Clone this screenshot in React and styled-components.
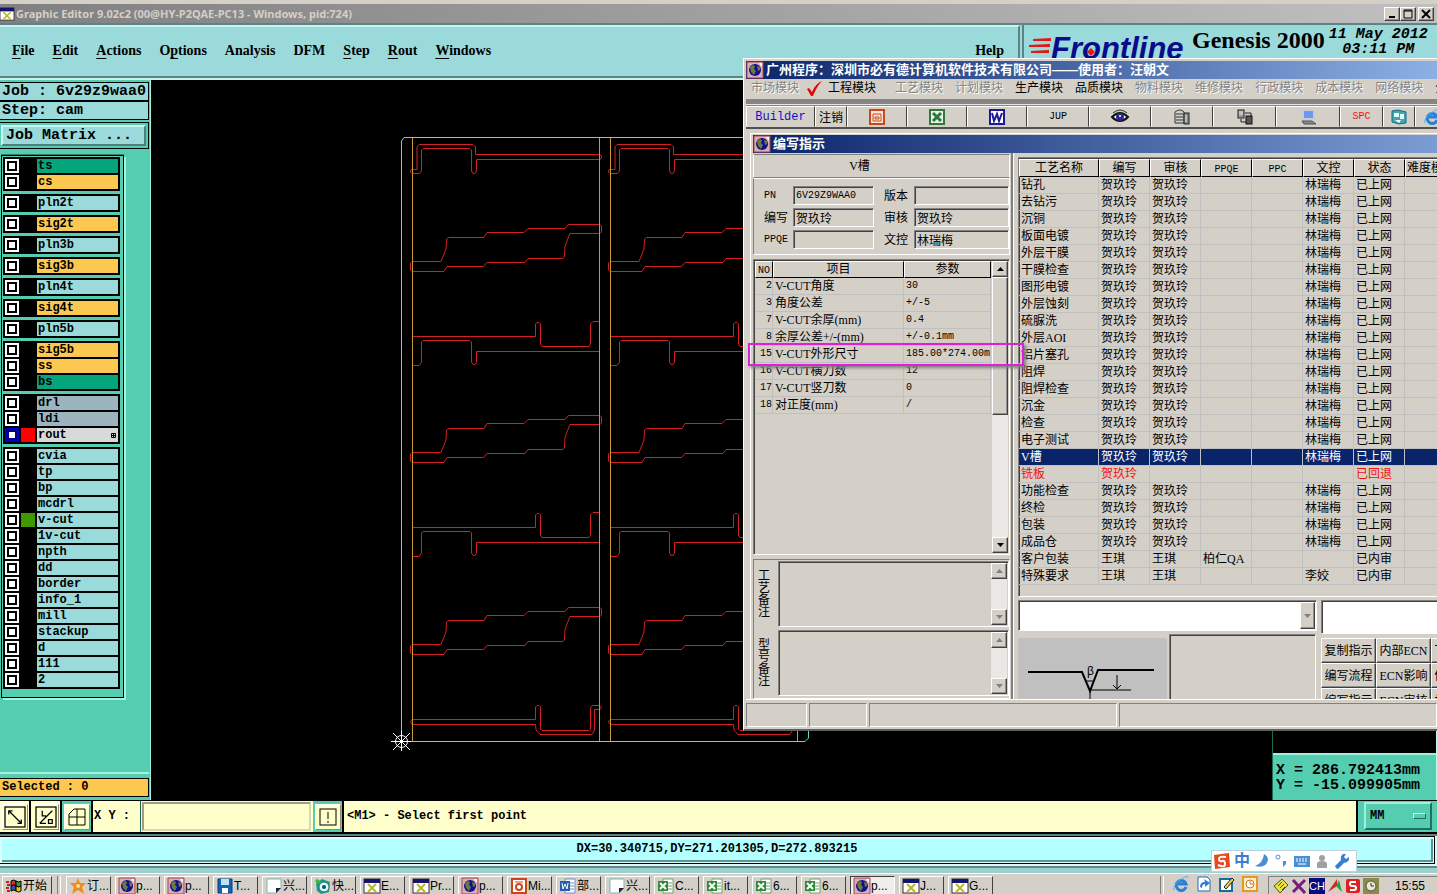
import React from "react";
import styled, { createGlobalStyle, css } from "styled-components";

const MONO = '"Liberation Mono", "Noto Sans CJK SC", monospace';
const SERIF = '"Liberation Serif", "Noto Sans CJK SC", serif';
const SANS = '"Liberation Sans", "Noto Sans CJK SC", sans-serif';

const GlobalStyle = createGlobalStyle`
  * { box-sizing: border-box; }
  body { margin: 0; background: #000; }
  button, input, select, textarea {
    font: inherit;
    color: inherit;
    margin: 0;
    padding: 0;
    border: 0;
    border-radius: 0;
    outline: none;
  }
`;

/* ---------- data ---------- */

const menus = [
  ["F", "ile"],
  ["E", "dit"],
  ["A", "ctions"],
  ["O", "p", "tions"],
  ["", "Analysis"],
  ["", "DFM"],
  ["S", "tep"],
  ["R", "out"],
  ["W", "indows"],
];

const AQUA = "#9bdada";
const ORANGE = "#fcc850";
const GREEN = "#04a57b";
const STEEL = "#9bb4bd";

const layerGroups = [
  [["ts", GREEN], ["cs", ORANGE]],
  [["pln2t", AQUA]],
  [["sig2t", ORANGE]],
  [["pln3b", AQUA]],
  [["sig3b", ORANGE]],
  [["pln4t", AQUA]],
  [["sig4t", ORANGE]],
  [["pln5b", AQUA]],
  [["sig5b", ORANGE], ["ss", ORANGE], ["bs", GREEN]],
  [["drl", STEEL], ["ldi", STEEL], ["rout", "#d9d9d9", "#ff0000", true]],
  [
    ["cvia", AQUA],
    ["tp", AQUA],
    ["bp", AQUA],
    ["mcdrl", AQUA],
    ["v-cut", AQUA, "#3f9a00"],
    ["1v-cut", AQUA],
    ["npth", AQUA],
    ["dd", AQUA],
    ["border", AQUA],
    ["info_1", AQUA],
    ["mill", AQUA],
    ["stackup", AQUA],
    ["d", AQUA],
    ["111", AQUA],
    ["2", AQUA],
  ],
];

const modules = [
  ["工艺模块", false],
  ["计划模块", false],
  ["生产模块", true],
  ["品质模块", true],
  ["物料模块", false],
  ["维修模块", false],
  ["行政模块", false],
  ["成本模块", false],
  ["网络模块", false],
  ["企业模块", true],
];

const params = [
  ["2", "V-CUT角度", "30"],
  ["3", "角度公差", "+/-5"],
  ["7", "V-CUT余厚(mm)", "0.4"],
  ["8", "余厚公差+/-(mm)", "+/-0.1mm"],
  ["15", "V-CUT外形尺寸", "185.00*274.00m"],
  ["16", "V-CUT横刀数", "12"],
  ["17", "V-CUT竖刀数", "0"],
  ["18", "对正度(mm)", "/"],
];

const H = "贺玖玲";
const L = "林瑞梅";
const steps = [
  "钻孔",
  "去钻污",
  "沉铜",
  "板面电镀",
  "外层干膜",
  "干膜检查",
  "图形电镀",
  "外层蚀刻",
  "硫脲洗",
  "外层AOI",
  "铝片塞孔",
  "阻焊",
  "阻焊检查",
  "沉金",
  "检查",
  "电子测试",
  "V槽",
  "铣板",
  "功能检查",
  "终检",
  "包装",
  "成品仓",
].map((name) =>
  name === "铣板"
    ? { name, state: "back", cells: [H, "", "", "", "", "已回退", ""] }
    : {
        name,
        state: name === "V槽" ? "active" : "",
        cells: [H, H, "", "", L, "已上网", ""],
      }
);
steps.push({ name: "客户包装", cells: ["王琪", "王琪", "柏仁QA", "", "", "已内审", ""] });
steps.push({ name: "特殊要求", cells: ["王琪", "王琪", "", "", "李姣", "已内审", ""] });

const tasks = [
  ["star", "订..."],
  ["globe", "p..."],
  ["globe", "p..."],
  ["disk", "T..."],
  ["page", "兴..."],
  ["eye", "快..."],
  ["xwin", "E..."],
  ["xwin", "Pr..."],
  ["globe", "p..."],
  ["ppt", "Mi..."],
  ["word", "部..."],
  ["page", "兴..."],
  ["excel", "C..."],
  ["excel", "it..."],
  ["excel", "6..."],
  ["excel", "6..."],
  ["globe", "p...", true],
  ["xwin", "J..."],
  ["xwin", "G..."],
];

/* ---------- icons ---------- */

const shapes = {
  globe: (
    <>
      <rect width="16" height="16" fill="#d8b0b4" />
      <path d="M0 0h16v16H0z" fill="none" stroke="#b04050" />
      <circle cx="8" cy="8" r="6" fill="#101090" />
      <path d="M3 5l3-2 2 1-1 3 2 2-2 4-3-3zM10 4l3 1v3l-2 1z" fill="#6a7a40" />
      <path d="M12 1l3 0v4z" fill="#fff" />
    </>
  ),
  xwin: (
    <>
      <rect x="0" y="1" width="16" height="14" fill="#fff" stroke="#333" />
      <rect x="0" y="1" width="16" height="4" fill="#14146e" />
      <path d="M4 6l8 8M12 6l-8 8" stroke="#b8b820" strokeWidth="2" />
    </>
  ),
  star: (
    <>
      <path d="M8 0l2 5 6 0-4 4 2 7-6-4-6 4 2-7-4-4 6 0z" fill="#f08a1c" />
      <circle cx="8" cy="8" r="2" fill="#ffe0a0" />
    </>
  ),
  disk: (
    <>
      <path d="M1 1h14v14H1z" fill="#1464b4" stroke="#0a3c78" />
      <path d="M4 1h8v6H4z" fill="#bfe4f8" />
      <path d="M5 10h6v5H5z" fill="#fff" />
    </>
  ),
  page: (
    <>
      <path d="M1 1h14v9l-5 5H1z" fill="#fff" stroke="#7fb8b8" />
      <path d="M15 10h-5v5z" fill="#223" />
    </>
  ),
  eye: (
    <>
      <path d="M1 5l6-4 8 3-1 10-8 2-4-3z" fill="#1f9a8a" />
      <circle cx="9" cy="9" r="5" fill="#dff8f4" stroke="#107a70" />
      <circle cx="9" cy="9" r="2" fill="#104a8a" />
      <path d="M1 2l4 3" stroke="#3cb43c" strokeWidth="3" />
    </>
  ),
  ppt: (
    <>
      <rect x="1" y="1" width="14" height="14" fill="#fff" stroke="#c8481c" strokeWidth="2" />
      <circle cx="8" cy="9" r="3" fill="none" stroke="#c8481c" strokeWidth="2" />
      <path d="M4 4h8" stroke="#c8481c" strokeWidth="1" />
    </>
  ),
  word: (
    <>
      <path d="M5 1h10v14H5z" fill="#fff" stroke="#6f8fc0" />
      <path d="M10 5h4M10 8h4M10 11h4" stroke="#6f8fc0" />
      <rect x="0" y="3" width="10" height="10" fill="#2a5cb0" />
      <path d="M2 5l1 6 2-5 2 5 1-6" fill="none" stroke="#fff" />
    </>
  ),
  excel: (
    <>
      <path d="M5 1h10v14H5z" fill="#fff" stroke="#6fa070" />
      <path d="M10 5h4M10 8h4M10 11h4" stroke="#6fa070" />
      <rect x="0" y="3" width="10" height="10" fill="#2f8a3a" />
      <path d="M2 5l6 6M8 5l-6 6" stroke="#fff" strokeWidth="2" />
    </>
  ),
  flag: (
    <>
      <path d="M5 3q3-2 5 0v5q-2-2-5 0z" fill="#e03020" stroke="#000" />
      <path d="M10 3q3 2 5 0v5q-2 2-5 0z" fill="#30a030" stroke="#000" />
      <path d="M5 8q3-2 5 0v5q-2-2-5 0z" fill="#3050c0" stroke="#000" />
      <path d="M10 8q3 2 5 0v5q-2 2-5 0z" fill="#f0c020" stroke="#000" />
      <path d="M0 4h3M1 7h3M0 10h3M1 13h3" stroke="#c02020" strokeWidth="2" />
    </>
  ),
  tbPpt: (
    <>
      <rect x="1" y="1" width="14" height="14" fill="#fbe4d8" stroke="#c8481c" strokeWidth="2" />
      <path d="M4 5h8v7H4zM6 8h4v2H6z" fill="none" stroke="#c8481c" strokeWidth="1" />
    </>
  ),
  tbExcel: (
    <>
      <rect x="1" y="1" width="14" height="14" fill="#e4f4e4" stroke="#2f7a3a" strokeWidth="2" />
      <path d="M4 4l8 8M12 4l-8 8" stroke="#2f7a3a" strokeWidth="3" />
    </>
  ),
  tbWord: (
    <>
      <rect x="1" y="1" width="14" height="14" fill="#fff" stroke="#1a1a9a" strokeWidth="2" />
      <path d="M3 4l2 8 3-7 2 7 3-8" fill="none" stroke="#1a1a9a" strokeWidth="2" />
    </>
  ),
  tbEye: (
    <>
      <path d="M0 8q8-8 16 0q-8 8-16 0z" fill="#fff" stroke="#111" strokeWidth="2" />
      <circle cx="8" cy="8" r="4" fill="#2a2a8a" />
      <circle cx="8" cy="7" r="1" fill="#fff" />
      <path d="M1 4q7-6 14 0" fill="none" stroke="#333" />
    </>
  ),
  tbDb: (
    <>
      <path d="M1 3q5-4 9 0v11H1z" fill="#d0d0cc" stroke="#333" />
      <path d="M2 5h7M2 8h7M2 11h7" stroke="#333" />
      <rect x="10" y="4" width="5" height="11" fill="#888" stroke="#222" />
      <path d="M12 6v7" stroke="#eee" />
    </>
  ),
  tbNet: (
    <>
      <rect x="1" y="1" width="6" height="8" fill="#999" stroke="#222" />
      <path d="M2 3h4M2 5h4" stroke="#eee" />
      <path d="M8 4h6v3M4 10v3h5" fill="none" stroke="#222" />
      <rect x="9" y="7" width="6" height="8" fill="#555" stroke="#111" />
    </>
  ),
  tbPc: (
    <>
      <path d="M3 1h11v9H3z" fill="#6a9af0" stroke="#c8ccd8" strokeWidth="2" />
      <path d="M2 12h10l4 3H4z" fill="#888" stroke="#555" />
    </>
  ),
  tbCard: (
    <>
      <path d="M1 2l6-1 8 2v11l-7 1-7-2z" fill="#3aa8b0" stroke="#1c6a80" />
      <path d="M3 4h5v4H3zM9 5h4v5H9z" fill="#e8fafa" />
      <path d="M4 11h6l-2 3" fill="#fff" />
    </>
  ),
  ie: (
    <>
      <path d="M13 11A5 5 0 1 1 13 8H5" fill="none" stroke="#2a80d8" strokeWidth="3" />
      <path d="M1 14Q-1 10 7 4t8-2" fill="none" stroke="#5ab0f0" strokeWidth="1" />
    </>
  ),
  sync: (
    <>
      <path d="M2 1h9l3 3v11H2z" fill="#fff" stroke="#2a6ab0" />
      <path d="M4 11q0-5 5-5l-1-3 6 4-5 4 0-3q-3 0-3 4z" fill="#2a80d8" />
    </>
  ),
  note: (
    <>
      <path d="M1 3h12v12H1z" fill="#fff" stroke="#1a6a9a" strokeWidth="2" />
      <path d="M5 11l8-9 2 2-8 9z" fill="#e8d060" stroke="#222" />
    </>
  ),
  clock: (
    <>
      <rect x="1" y="1" width="14" height="14" fill="#fff0c8" stroke="#e89820" strokeWidth="2" />
      <circle cx="8" cy="8" r="4" fill="#fff" stroke="#c87820" />
      <path d="M8 5v3h3" fill="none" stroke="#c87820" />
    </>
  ),
  note2: (
    <>
      <path d="M1 8l8-7 6 6-8 8z" fill="#e8e040" stroke="#555510" />
      <path d="M5 8l4-4M7 10l4-4M9 12l3-3" stroke="#555510" />
    </>
  ),
  cross: <path d="M2 2l12 13M14 2L2 14" stroke="#7a1a7a" strokeWidth="3" />,
  arrow: (
    <>
      <path d="M1 14L10 1v7z" fill="#e02020" />
      <path d="M9 8l3-6 3 12z" fill="#20a040" />
    </>
  ),
  sred: (
    <>
      <rect x="1" y="1" width="14" height="14" rx="2" fill="#e02020" />
      <path d="M11 4H6q-1 0-1 2t2 2h2q2 0 2 2t-2 2H5" fill="none" stroke="#fff" strokeWidth="2" />
    </>
  ),
  clock2: (
    <>
      <rect width="16" height="16" fill="#8a8a4a" />
      <circle cx="8" cy="8" r="5" fill="#e8e8d8" stroke="#555530" />
      <path d="M8 5v3h3" fill="none" stroke="#333" />
    </>
  ),
  sogou: (
    <>
      <path d="M0 2l15-2 1 14-15 2z" fill="#e8481c" />
      <path d="M12 4Q5 3 5 6t3 2 3 3-7 1" fill="none" stroke="#fff" strokeWidth="2" />
    </>
  ),
  moon: <path d="M10 1q-1 9-9 12q11 3 13-6q0-4-4-6z" fill="#4a90d0" />,
  dot: (
    <>
      <circle cx="4" cy="4" r="2" fill="none" stroke="#4a90d0" />
      <path d="M9 8h3v3l-3 3v-2z" fill="#4a90d0" />
    </>
  ),
  keys: (
    <>
      <rect x="0" y="3" width="16" height="11" fill="#4a90d0" />
      <path d="M2 6h12M2 8h12" stroke="#fff" strokeDasharray="2 1" />
      <path d="M4 11h8" stroke="#fff" />
    </>
  ),
  person: (
    <>
      <circle cx="8" cy="5" r="3" fill="#a0a0a0" />
      <path d="M3 15V11q0-3 5-3t5 3v4z" fill="#a0a0a0" />
    </>
  ),
  wrench: (
    <path
      d="M2 15l-1-2 6-6q-1-4 2-6h3l-2 3 2 2 3-2q1 5-5 6l-6 6z"
      fill="#3a80d0"
    />
  ),
  tick: <path d="M0 9l2-1 3 4Q8 4 15 1Q10 6 6 16H4z" fill="#e00c0c" />,
  diag: (
    <>
      <rect x="0" y="0" width="16" height="16" fill="none" stroke="#000" />
      <path d="M3 3l10 10M3 6V3h3M13 10v3h-3" fill="none" stroke="#000" />
    </>
  ),
  angle: (
    <>
      <rect x="0" y="0" width="16" height="16" fill="none" stroke="#000" />
      <path d="M3 13L13 3M3 13h5M5 3v4h3M10 10v3h3v-3z" fill="none" stroke="#000" />
    </>
  ),
  grid: (
    <>
      <path d="M0 16V5L5 0H16V16zM0 8h16M8 0v16" fill="none" stroke="#000" />
    </>
  ),
  bang: (
    <>
      <rect x="0" y="0" width="16" height="16" fill="none" stroke="#000" />
      <path d="M8 3v7M8 12v2" stroke="#000" strokeWidth="1" />
    </>
  ),
};

const Svg = styled.svg`
  display: block;
  flex: none;
  overflow: visible;
`;

const Icon = ({ name, size = 16 }) => (
  <Svg width={size} height={size} viewBox="0 0 16 16" aria-hidden="true">
    {shapes[name]}
  </Svg>
);

/* ---------- shared bevels ---------- */

const raised = css`
  border: 1px solid;
  border-color: #fff #404040 #404040 #fff;
  box-shadow: inset -1px -1px 0 #909090;
`;

const sunken = css`
  border: 1px solid;
  border-color: #808080 #fff #fff #808080;
  box-shadow: inset 1px 1px 0 #404040;
`;

const Screen = styled.div`
  position: relative;
  display: flex;
  flex-direction: column;
  min-height: 100vh;
  overflow: hidden;
  background: #000;
  color: #000;
`;

const TitleBar = styled.header`
  display: flex;
  align-items: center;
  height: 23px;
  border-top: 4px solid #d4d0c8;
  background: linear-gradient(90deg, #808080, #c0c0c0);
  padding-right: 3px;
  color: #d4d0c8;
  font: bold 11px/18px "Noto Sans", ${SANS};
`;

const TitleText = styled.h1`
  flex: 1;
  margin: 0 0 0 2px;
  font: inherit;
  white-space: nowrap;
`;

const WinButton = styled.button`
  width: 16px;
  height: 14px;
  background: #d4d0c8;
  color: #000;
  display: grid;
  place-items: center;
  ${raised}
  margin-left: ${(p) => (p.$gap ? 2 : 0)}px;
`;

const Header = styled.div`
  display: flex;
  height: 57px;
  background: #9bdada;
  border-top: 2px solid #5c8484;
`;

const MenuBar = styled.nav`
  flex: 1;
  display: flex;
  align-items: center;
  gap: 18px;
  padding: 0 14px 2px 12px;
  border-top: 2px solid #c8f4f0;
  border-right: 2px solid #5c8484;
  border-bottom: 2px solid #5c8484;
  box-shadow: 0 2px 0 #c8f4f0;
  margin-bottom: 2px;
  font: bold 14px/18px ${SERIF};
`;

const MenuItem = styled.button`
  background: none;
  margin-left: ${(p) => (p.$last ? "auto" : 0)};
  u {
    text-underline-offset: 3px;
  }
`;

const Brand = styled.div`
  display: flex;
  width: 415px;
  margin-left: 2px;
  padding: 1px 5px 0 4px;
  border-left: 2px solid #5c8484;
`;

const BrandName = styled.div`
  font: bold 24px/28px ${SERIF};
  white-space: nowrap;
  margin-left: 4px;
`;

const BrandDate = styled.div`
  flex: 1;
  padding-top: 1px;
  font: italic bold 15px/15px ${MONO};
  text-align: center;
  white-space: nowrap;
`;

const Workspace = styled.div`
  flex: 1;
  display: flex;
`;

const Sidebar = styled.aside`
  display: flex;
  flex-direction: column;
  width: 151px;
  padding: 2px 2px 3px 0;
  background: #55cdb1;
  box-shadow: inset -1px 0 0 #9ff0dc;
  font-family: ${MONO};
  font-weight: bold;
`;

const JobLine = styled.div`
  height: 19px;
  padding-left: 2px;
  border: 1px solid #000;
  border-left: 0;
  background: #9bdada;
  font-size: 15px;
  line-height: 18px;
  white-space: nowrap;
`;

const MatrixFrame = styled.div`
  margin: 2px 0 6px;
  height: 27px;
  padding: 2px 2px 2px 1px;
  border: 1px solid #000;
  border-left: 0;
`;

const MatrixButton = styled.button`
  width: 100%;
  height: 21px;
  padding-left: 3px;
  text-align: left;
  background: #9bdada;
  border: 2px solid;
  border-color: #c8f8f4 #4d7d7d #4d7d7d #c8f8f4;
  font-size: 15px;
  line-height: 17px;
`;

const LayerPanel = styled.div`
  width: 123px;
  margin-left: 1px;
  padding: 1px 2px 8px 1px;
  display: flex;
  flex-direction: column;
  gap: 3px;
  border: 1px solid #000;
  box-shadow: 2px 2px 0 #a8f0e0, 0 -1px 0 #3c7a6c;
`;

const LayerGroup = styled.div`
  padding: 1px 2px;
  width: 117px;
  background: #000;
`;

const LayerRow = styled.label`
  display: flex;
  align-items: center;
  gap: 2px;
  height: 16px;
`;

const LayerCheck = styled.input.attrs({ type: "checkbox" })`
  appearance: none;
  width: 14px;
  height: 14px;
  border: 2px solid ${(p) => (p.$on ? "#0000c8" : "#fff")};
  background: #fff;
  box-shadow: inset 0 0 0 2px ${(p) => (p.$on ? "#000080" : "#000")};
`;

const LayerColor = styled.span`
  width: 14px;
  height: 14px;
  background: ${(p) => p.$color || "#000"};
`;

const LayerName = styled.span`
  flex: 1;
  display: flex;
  justify-content: space-between;
  align-items: center;
  height: 14px;
  padding: 0 2px 0 1px;
  background: ${(p) => p.$bg};
  font-size: 12px;
  line-height: 14px;
`;

const Selected = styled.div`
  margin-top: auto;
  height: 19px;
  padding-left: 2px;
  border: 1px solid #000;
  border-left: 0;
  background: #fcc850;
  box-shadow: 0 -4px 0 #55cdb1, 0 -6px 0 #a8f0e0;
  font-size: 12px;
  line-height: 17px;
`;

const Canvas = styled.main`
  flex: 1;
  display: flex;
  justify-content: space-between;
  align-items: flex-end;
  background: #000;
`;

const Side = styled.div`
  width: 165px;
  padding-top: 30px;
  border-left: 1px solid #1c6a5a;
  border-right: 1px solid #c8f8f0;
`;

const Coords = styled.div`
  padding: 8px 0 7px 3px;
  background: #55cdb1;
  box-shadow: 0 -2px 0 #9ff0dc;
  font: bold 15px/15px ${MONO};
  white-space: pre;
`;

const CommandBar = styled.div`
  display: flex;
  height: 34px;
  border-top: 1px solid #000;
  border-bottom: 2px solid #000;
  background: #ffffcc;
  font: bold 12px/30px ${MONO};
`;

const ToolCell = styled.button`
  width: 31px;
  display: grid;
  place-items: center;
  border-right: 2px solid #000;
  background: ${(p) => (p.$on ? "#55cdb1" : "#ffffcc")};
  span {
    padding: ${(p) => (p.$on ? 4 : 2)}px;
    background: #ffffcc;
    border: 1px solid;
    border-color: #fff #8c8c74 #8c8c74 #fff;
  }
`;

const PointLabel = styled.label`
  width: 48px;
  padding-left: 1px;
  border-right: 1px solid #1c6a5a;
  white-space: pre;
`;

const PointInput = styled.input`
  width: 169px;
  height: 29px;
  margin: 1px 2px 0 1px;
  background: #ffffcc;
  border: 2px solid;
  border-color: #a0a080 #d8d8b0 #d8d8b0 #a0a080;
`;

const Prompt = styled.div`
  flex: 1;
  padding-left: 3px;
`;

const UnitBox = styled.div`
  width: 81px;
  padding: 1px 5px 1px 6px;
  border-left: 2px solid #000;
  background: #55cdb1;
`;

const UnitButton = styled.button`
  display: flex;
  justify-content: space-between;
  align-items: center;
  width: 100%;
  height: 28px;
  padding: 0 4px;
  background: #55cdb1;
  border: 2px solid;
  border-color: #9ff0dc #24705e #24705e #9ff0dc;
  i {
    width: 13px;
    height: 6px;
    border: 1px solid;
    border-color: #c8f8f0 #24705e #24705e #c8f8f0;
  }
`;

const StatusWrap = styled.div`
  height: 39px;
  padding-right: 2px;
  background: linear-gradient(#d8f8f8 0 30px, #6c8484 30px 32px, #9bd0d0 32px);
  border-top: 2px solid #5c8484;
`;

const StatusLine = styled.div`
  height: 28px;
  background: #b4ffff;
  border: 1px solid #000;
  border-left: 0;
  box-shadow: inset 2px 2px 0 #d8ffff, inset -1px -1px 0 #d8ffff,
    inset -3px -3px 0 #5c9494;
  font: bold 12px/24px ${MONO};
  text-align: center;
`;

const Taskbar = styled.footer`
  display: flex;
  align-items: flex-end;
  gap: 4px;
  height: 21px;
  padding-left: 2px;
  background: #d4d0c8;
  border-top: 1px solid #fff;
  overflow: hidden;
  font: 12px/16px ${SANS};
`;

const TaskButton = styled.button`
  display: flex;
  align-items: center;
  gap: 1px;
  flex: none;
  width: ${(p) => (p.$start ? 50 : 45)}px;
  height: 18px;
  padding-left: 3px;
  background: #d4d0c8;
  white-space: nowrap;
  overflow: hidden;
  border: 1px solid;
  border-bottom: 0;
  border-color: #fff #404040 #404040 #fff;
  ${(p) =>
    p.$on &&
    css`
      background: #f0eeea;
      border-color: #404040 #fff #fff #404040;
    `}
`;

const Grip = styled.span`
  width: 4px;
  height: 18px;
  border-left: 1px solid #808080;
  border-right: 1px solid #fff;
  margin: 0 ${(p) => p.$space || 1}px;
`;

const Quick = styled.div`
  display: flex;
  gap: 7px;
  margin: 0 0 0 auto;
`;

const Tray = styled.div`
  display: flex;
  gap: 2px;
  height: 18px;
  margin-left: 6px;
  padding: 1px 12px 0 4px;
  border-left: 1px solid #808080;
  border-top: 1px solid #808080;
  time {
    margin-left: 14px;
  }
`;

const Lang = styled.span`
  width: 16px;
  background: #0a0a80;
  color: #fff;
  font-size: 11px;
  text-align: center;
`;

/* ---------- floating windows ---------- */

const Dialog = styled.section`
  position: absolute;
  top: 58px;
  left: 743px;
  right: 0;
  padding: 2px 0 1px 2px;
  border: 1px solid #fff;
  border-right: 0;
  border-bottom: 2px solid #606060;
  background: #d4d0c8;
  overflow: hidden;
  font: 12px/16px ${SERIF};
`;

const DialogTitle = styled.div`
  display: flex;
  align-items: center;
  gap: 3px;
  height: 18px;
  padding-left: 1px;
  background: linear-gradient(90deg, #0a246a, ${(p) => p.$to});
  color: #fff;
  font: bold 13px/18px ${SANS};
  white-space: nowrap;
`;

const ModuleBar = styled.div`
  display: flex;
  align-items: center;
  gap: 12px;
  height: 20px;
  padding: 0 0 2px 5px;
  white-space: nowrap;
  overflow: hidden;
`;

const ModuleItem = styled.button`
  display: flex;
  flex: none;
  gap: 5px;
  background: none;
  margin-right: ${(p) => p.$after || 0}px;
  color: ${(p) => (p.$on ? "#000" : "#848484")};
  text-shadow: ${(p) => (p.$on ? "none" : "1px 1px 0 #fff")};
`;

const Tools = styled.div`
  display: flex;
  height: 30px;
  padding-top: 2px;
  border-top: 5px solid #868484;
  border-bottom: 2px solid #505050;
  background: linear-gradient(#e8e6e0 0 1px, #868484 1px 3px, #d4d0c8 3px);
  overflow: hidden;
`;

const Tool = styled.button`
  flex: none;
  display: grid;
  place-items: center;
  width: ${(p) => p.$w}px;
  height: 21px;
  background: #d4d0c8;
  border: 1px solid;
  border-color: #fff #404040 #d4d0c8 #fff;
  color: ${(p) => p.$color || "#000"};
  font: ${(p) => p.$font || "12px"} ${(p) => (p.$font ? MONO : SERIF)};
`;

const Child = styled.div`
  margin: 4px 0 0 4px;
  padding: 1px 0 0 2px;
  border-top: 1px solid #fff;
  border-left: 1px solid #fff;
`;

const ChildBody = styled.div`
  display: flex;
  height: 546px;
  overflow: hidden;
`;

const LeftPane = styled.div`
  flex: none;
  display: flex;
  flex-direction: column;
  width: 257px;
`;

const PaneTitle = styled.h2`
  height: 24px;
  margin: 1px 0 0;
  border: 1px solid;
  border-color: #808080 #fff #808080 #fff;
  font: 12px/22px ${SERIF};
  text-align: center;
  padding-right: 44px;
`;

const InfoForm = styled.div`
  display: grid;
  grid-template-columns: 29px 81px 10px 30px 95px;
  grid-auto-rows: 19px;
  gap: 3px 0;
  height: 77px;
  padding: 7px 0 0 10px;
  border: 1px solid;
  border-color: #fff #fff #fff #808080;
  align-items: center;
`;

const InfoLabel = styled.label`
  white-space: nowrap;
  ${(p) => p.$code && `font: 10px ${MONO};`}
`;

const InfoInput = styled.input`
  width: 100%;
  height: 19px;
  padding-left: 2px;
  background: #d4d0c8;
  ${sunken}
  ${(p) => p.$code && `font: 10px ${MONO};`}
`;

const ParamBox = styled.div`
  display: flex;
  align-items: flex-start;
  height: 297px;
  margin: 4px 0;
  padding: 1px;
  ${sunken}
`;

const Table = styled.table`
  flex: none;
  table-layout: fixed;
  border-collapse: separate;
  border-spacing: 0;
  width: ${(p) => p.$w}px;
  th,
  td {
    overflow: hidden;
    white-space: nowrap;
    font-weight: normal;
  }
  th {
    height: ${(p) => p.$head}px;
    padding: 0;
    border: 1px solid;
    border-color: #fff #000 #000 #fff;
    line-height: 14px;
  }
  td {
    height: 17px;
    padding: 0 0 0 2px;
    line-height: 14px;
    border-right: 1px solid #c0c0c0;
    border-bottom: 1px solid #c0c0c0;
  }
`;

const Code = styled.span`
  font: 10px ${MONO};
`;

const Num = styled.td`
  font: 10px ${MONO};
  text-align: ${(p) => (p.$right ? "right" : "left")};
`;

const StepRow = styled.tr`
  ${(p) => p.$state === "active" && "background: #0a246a; color: #fff;"}
  ${(p) => p.$state === "back" && "color: #f01010;"}
`;

const Scroll = styled.div`
  flex: none;
  display: flex;
  flex-direction: column;
  justify-content: space-between;
  align-self: stretch;
  width: 16px;
  margin-left: ${(p) => (p.$push ? "auto" : 0)};
  background: #eae8e4;
`;

const ScrollThumb = styled.div`
  height: 138px;
  margin-bottom: auto;
  background: #d4d0c8;
  ${raised}
`;

const ScrollArrow = styled.button`
  display: grid;
  place-items: center;
  height: 16px;
  background: #d4d0c8;
  color: ${(p) => (p.$off ? "#808080" : "#000")};
  ${raised}
`;

const Notes = styled.div`
  display: grid;
  grid-template-columns: 24px 1fr;
  grid-auto-rows: 66px;
  gap: 3px 0;
  height: 140px;
  padding-top: 1px;
  border: 1px solid;
  border-color: #808080 #fff #fff #808080;
`;

const NoteLabel = styled.label`
  width: 12px;
  margin: 9px 0 0 4px;
  line-height: 12px;
  word-break: break-all;
`;

const NoteBox = styled.div`
  display: flex;
  padding: 1px;
  ${sunken}
  textarea {
    flex: 1;
    min-width: 0;
    resize: none;
    background: #d4d0c8;
  }
`;

const RightPane = styled.div`
  flex: 1;
  min-width: 0;
  margin-left: 1px;
  padding-left: 5px;
  border-left: 2px solid #808080;
  box-shadow: inset 1px 0 0 #fff;
`;

const StepBox = styled.div`
  height: 440px;
  margin-top: 4px;
  padding-top: 1px;
  overflow: hidden;
  ${sunken}
  border-right: 0;
`;

const Below = styled.div`
  display: flex;
  gap: 4px;
  margin-top: 3px;
`;

const FigurePart = styled.div`
  flex: none;
  width: 299px;
`;

const ActionPart = styled.div`
  flex: none;
  width: 165px;
`;

const Combo = styled.div`
  display: flex;
  height: 31px;
  padding: 1px;
  background: #fff;
  ${sunken}
  select {
    flex: 1;
    appearance: none;
    background: #fff;
  }
`;

const ComboArrow = styled.span`
  display: grid;
  place-items: center;
  width: 15px;
  background: #d4d0c8;
  color: #808080;
  ${raised}
`;

const Figures = styled.div`
  display: flex;
  gap: 2px;
  margin-top: 3px;
  height: 80px;
`;

const Figure = styled.div`
  width: 149px;
  margin-top: 4px;
  background: #c0c0c0;
`;

const EmptyFigure = styled.div`
  width: 147px;
  ${sunken}
`;

const WhiteInput = styled.input`
  width: 100%;
  height: 34px;
  background: #fff;
  ${sunken}
`;

const Actions = styled.div`
  display: grid;
  grid-template-columns: repeat(3, 55px);
  grid-auto-rows: 25px;
  margin-top: 4px;
`;

const Action = styled.button`
  background: #d4d0c8;
  white-space: nowrap;
  ${raised}
`;

const DialogStatus = styled.div`
  display: grid;
  grid-template-columns: 61px 58px 248px 1fr;
  gap: 2px;
  height: 29px;
  padding: 3px 0 1px;
  border-top: 1px solid #fff;
  span {
    border: 1px solid;
    border-color: #808080 #fff #fff #808080;
  }
`;

const Callout = styled.div`
  position: absolute;
  top: 284px;
  left: 4px;
  width: 276px;
  height: 23px;
  border: 2px solid #e020d8;
  box-shadow: 2px 2px 3px #808080;
`;

const ImeBar = styled.div`
  position: absolute;
  right: 80px;
  bottom: 22px;
  display: flex;
  align-items: center;
  gap: 4px;
  height: 22px;
  padding: 0 6px 0 2px;
  background: #fff;
  border: 1px solid #c0d0e0;
  color: #3a80d0;
  font: bold 16px/20px ${SANS};
`;

/* ---------- pieces ---------- */

const Arrow = ({ up }) => (
  <Svg width="7" height="4" viewBox="0 0 7 4" aria-hidden="true">
    <path d={up ? "M0 4L3.5 0L7 4z" : "M0 0L3.5 4L7 0z"} fill="currentColor" />
  </Svg>
);

const ScrollBar = ({ off, thumb, push }) => (
  <Scroll $push={push}>
    <ScrollArrow $off={off} aria-label="up">
      <Arrow up />
    </ScrollArrow>
    {thumb && <ScrollThumb />}
    <ScrollArrow $off={off} aria-label="down">
      <Arrow />
    </ScrollArrow>
  </Scroll>
);

const hook =
  "M411 169.5H417V147L419 144.5H473L475.5 147V154.5H599.5L601.5 156V158L599.5 159.5H476.5V171L475 173.5H473L471.5 171V150L470 148.5H423L421.5 150V171L419.5 173.5H412L410.5 172z";
const stairs =
  "M410.5 263L412 261.5H441L446 249L446.5 239L448.5 237.5H484L487 232.5H524L528 228.5H565L568.5 224.5H600L601.5 226V232L600 233.5H570L565 246L564.5 257L562.5 258.5H528L525 262.5H487L483.5 266.5H447L444 271.5H412L410.5 270z";
const joint =
  "M412.5 336.5H535.5V324L537 322.5H539L540.5 324V344L542 346.5H589L590.5 344V324L593 321.5H599.5M412.5 365.5H419L421.5 362V342L423 340.5H470L471.5 342V362L473 364.5H475L476.5 362V351.5H599.5";
const tail =
  "M412 719.5H535.5V707L537 705.5H539L540.5 707V729L542 730.5H589L590.5 729V708L592 705.5H600L601.5 707.5L600 709.5H594.5V730L592 734.5H540L536 730L535.5 724.5H412L410.5 722z";

const Column = ({ x }) => (
  <g transform={`translate(${x} 0)`} fill="none" stroke="#d42020">
    <path d={hook} />
    {[0, 191, 383].map((y) => (
      <path key={y} d={stairs} transform={`translate(0 ${y})`} />
    ))}
    {[0, 191].map((y) => (
      <path key={y} d={joint} transform={`translate(0 ${y})`} />
    ))}
    <path d={tail} />
  </g>
);

// board outline, v-cut lines and rout paths
const Board = () => (
  <Svg width="670" height="720" viewBox="151 80 670 720">
    <path
      d="M404 137.5H805L808.5 141V738L805 741.5H401.5V141z"
      fill="none"
      stroke="#50e0d8"
    />
    <Column x={0} />
    <Column x={198} />
    <path d="M412.5 138V741M599.5 138V741M610.5 138V741M797.5 138V741" stroke="#c89a38" />
    <g fill="none" stroke="#fff">
      <circle cx="401.5" cy="741.5" r="6" />
      <path d="M391 741.5h20M401.5 731v20M393 733l17 17M410 733l-17 17" />
    </g>
  </Svg>
);

const Logo = () => (
  <Svg width="160" height="34" viewBox="0 0 160 34">
    <path d="M5 13l18-1v3H5zM1 19l21-1v3H1zM3 25l18-1v3H3z" fill="#e01818" />
    <text x="23" y="33" fill="#0a0a8c" fontFamily="Liberation Sans" fontWeight="bold" fontStyle="italic" fontSize="31">
      Frontline
    </text>
    <path d="M63 22l4 4-4 4-4-4z" fill="#e01818" />
  </Svg>
);

const VCut = () => (
  <Svg width="149" height="76" viewBox="0 0 149 76">
    <path d="M10 34H64L72 53L80 32H136" fill="none" stroke="#000" strokeWidth="2" />
    <path d="M68 43h8M72 52h41M99 37v14M95 47l4 4l4-4M72 52v10" fill="none" stroke="#000" />
    <text x="69" y="37" fontFamily="Liberation Sans" fontSize="12">
      β
    </text>
  </Svg>
);

const Field = ({ id, label, value, code, second }) => (
  <>
    {second && <span />}
    <InfoLabel htmlFor={id} $code={/^[A-Z]+$/.test(label)}>
      {label}
    </InfoLabel>
    <InfoInput id={id} defaultValue={value} $code={code} />
  </>
);

const stepHeads = [
  "工艺名称",
  "编写",
  "审核",
  <Code>PPQE</Code>,
  <Code>PPC</Code>,
  "文控",
  "状态",
  "难度模",
];

const EngineeringWindow = () => (
  <Dialog>
    <DialogTitle $to="#8cb0e4">
      <Icon name="globe" />
      <span>广州程序：深圳市必有德计算机软件技术有限公司——使用者：汪朝文</span>
    </DialogTitle>
    <ModuleBar>
      <ModuleItem $after={-4}>市场模块</ModuleItem>
      <ModuleItem $on $after={7}>
        <Icon name="tick" />
        工程模块
      </ModuleItem>
      {modules.map(([name, on]) => (
        <ModuleItem key={name} $on={on}>
          {name}
        </ModuleItem>
      ))}
    </ModuleBar>
    <Tools>
      <Tool $w={69} $color="#1010d0" $font="12px">
        Builder
      </Tool>
      <Tool $w={32}>注销</Tool>
      <Tool $w={60} aria-label="PowerPoint"><Icon name="tbPpt" /></Tool>
      <Tool $w={60} aria-label="Excel"><Icon name="tbExcel" /></Tool>
      <Tool $w={60} aria-label="Word"><Icon name="tbWord" /></Tool>
      <Tool $w={62} $font="10px">JUP</Tool>
      <Tool $w={62} aria-label="view"><Icon name="tbEye" /></Tool>
      <Tool $w={62} aria-label="database"><Icon name="tbDb" /></Tool>
      <Tool $w={63} aria-label="network"><Icon name="tbNet" /></Tool>
      <Tool $w={64} aria-label="computer"><Icon name="tbPc" /></Tool>
      <Tool $w={43} $color="#f01010" $font="10px">SPC</Tool>
      <Tool $w={32} aria-label="cards"><Icon name="tbCard" /></Tool>
      <Tool $w={34} aria-label="browser"><Icon name="ie" /></Tool>
    </Tools>
    <Child>
      <DialogTitle $to="#7c9cd4">
        <Icon name="globe" />
        <span>编写指示</span>
      </DialogTitle>
      <ChildBody>
        <LeftPane>
          <PaneTitle>V槽</PaneTitle>
          <InfoForm>
            <Field id="pn" label="PN" value="6V29Z9WAA0" code />
            <Field id="ver" label="版本" value="" second />
            <Field id="writer" label="编写" value={H} />
            <Field id="audit" label="审核" value={H} second />
            <Field id="ppqe" label="PPQE" value="" />
            <Field id="doc" label="文控" value={L} second />
          </InfoForm>
          <ParamBox>
            <Table $w={236} $head={17}>
              <colgroup>
                <col width="18" />
                <col width="131" />
                <col width="87" />
              </colgroup>
              <thead>
                <tr>
                  <th><Code>NO</Code></th>
                  <th>项目</th>
                  <th>参数</th>
                </tr>
              </thead>
              <tbody>
                {params.map(([no, name, value]) => (
                  <tr key={no}>
                    <Num $right>{no}</Num>
                    <td>{name}</td>
                    <Num>{value}</Num>
                  </tr>
                ))}
              </tbody>
            </Table>
            <ScrollBar thumb push />
          </ParamBox>
          <Notes>
            <NoteLabel htmlFor="craft">工艺备注</NoteLabel>
            <NoteBox>
              <textarea id="craft" />
              <ScrollBar off />
            </NoteBox>
            <NoteLabel htmlFor="model">型号备注</NoteLabel>
            <NoteBox>
              <textarea id="model" />
              <ScrollBar off />
            </NoteBox>
          </Notes>
        </LeftPane>
        <RightPane>
          <StepBox>
            <Table $w={426} $head={18}>
              <colgroup>
                <col width="80" />
                {[1, 2, 3, 4, 5, 6].map((n) => (
                  <col key={n} width="51" />
                ))}
                <col width="40" />
              </colgroup>
              <thead>
                <tr>
                  {stepHeads.map((h, i) => (
                    <th key={i}>{h}</th>
                  ))}
                </tr>
              </thead>
              <tbody>
                {steps.map((s) => (
                  <StepRow key={s.name} $state={s.state}>
                    <td>{s.name}</td>
                    {s.cells.map((c, i) => (
                      <td key={i}>{c}</td>
                    ))}
                  </StepRow>
                ))}
              </tbody>
            </Table>
          </StepBox>
          <Below>
            <FigurePart>
              <Combo>
                <select aria-label="option" />
                <ComboArrow>
                  <Arrow />
                </ComboArrow>
              </Combo>
              <Figures>
                <Figure>
                  <VCut />
                </Figure>
                <EmptyFigure />
              </Figures>
            </FigurePart>
            <ActionPart>
              <WhiteInput aria-label="remark" />
              <Actions>
                <Action>复制指示</Action>
                <Action>内部ECN</Action>
                <Action>下载指示</Action>
                <Action>编写流程</Action>
                <Action>ECN影响</Action>
                <Action>修改流程</Action>
                <Action>编写指示</Action>
                <Action>ECN审核</Action>
                <Action>打印指示</Action>
              </Actions>
            </ActionPart>
          </Below>
        </RightPane>
      </ChildBody>
    </Child>
    <DialogStatus>
      <span />
      <span />
      <span />
      <span />
    </DialogStatus>
    <Callout />
  </Dialog>
);

const App = () => (
  <Screen>
    <GlobalStyle />
    <TitleBar>
      <Icon name="xwin" size={14} />
      <TitleText>Graphic Editor 9.02c2 (00@HY-P2QAE-PC13 - Windows, pid:724)</TitleText>
      <WinButton aria-label="minimize">
        <Svg width="8" height="8"><path d="M1 7h6" stroke="#000" strokeWidth="2" /></Svg>
      </WinButton>
      <WinButton aria-label="maximize">
        <Svg width="8" height="8"><path d="M0 0h8v8H0zM0 1h8" fill="none" stroke="#000" /></Svg>
      </WinButton>
      <WinButton $gap aria-label="close">
        <Svg width="8" height="8"><path d="M0 0l8 8M8 0l-8 8" stroke="#000" strokeWidth="2" /></Svg>
      </WinButton>
    </TitleBar>

    <Header>
      <MenuBar>
        {menus.map((m) => (
          <MenuItem key={m.join("")}>
            {m.length === 3 ? (
              <>
                {m[0]}
                <u>{m[1]}</u>
                {m[2]}
              </>
            ) : (
              <>
                <u>{m[0]}</u>
                {m[1]}
              </>
            )}
          </MenuItem>
        ))}
        <MenuItem $last>Help</MenuItem>
      </MenuBar>
      <Brand>
        <Logo />
        <BrandName>Genesis 2000</BrandName>
        <BrandDate>
          11 May 2012
          <br />
          03:11 PM
        </BrandDate>
      </Brand>
    </Header>

    <Workspace>
      <Sidebar>
        <JobLine>Job : 6v29z9waa0</JobLine>
        <JobLine>Step: cam</JobLine>
        <MatrixFrame>
          <MatrixButton>Job Matrix ...</MatrixButton>
        </MatrixFrame>
        <LayerPanel>
          {layerGroups.map((group) => (
            <LayerGroup key={group[0][0]}>
              {group.map(([name, bg, color, on]) => (
                <LayerRow key={name}>
                  <LayerCheck $on={on} />
                  <LayerColor $color={color} />
                  <LayerName $bg={bg}>
                    {name}
                    {on && (
                      <Svg width="5" height="5" viewBox="0 0 5 5">
                        <path d="M.5.5h4v4h-4zM2.5 0v5M0 2.5h5" fill="none" stroke="#000" />
                      </Svg>
                    )}
                  </LayerName>
                </LayerRow>
              ))}
            </LayerGroup>
          ))}
        </LayerPanel>
        <Selected>Selected : 0</Selected>
      </Sidebar>
      <Canvas>
        <Board />
        <Side>
          <Coords>{"X = 286.792413mm\nY = -15.099905mm"}</Coords>
        </Side>
      </Canvas>
    </Workspace>

    <CommandBar>
      <ToolCell aria-label="corner"><span><Icon name="diag" size={20} /></span></ToolCell>
      <ToolCell aria-label="angle"><span><Icon name="angle" size={20} /></span></ToolCell>
      <ToolCell $on aria-label="grid"><span><Icon name="grid" /></span></ToolCell>
      <PointLabel htmlFor="point">X Y :</PointLabel>
      <PointInput id="point" />
      <ToolCell $on aria-label="alert"><span><Icon name="bang" /></span></ToolCell>
      <Prompt>{"<M1> - Select first point"}</Prompt>
      <UnitBox>
        <UnitButton>
          MM
          <i />
        </UnitButton>
      </UnitBox>
    </CommandBar>

    <StatusWrap>
      <StatusLine>DX=30.340715,DY=271.201305,D=272.893215</StatusLine>
    </StatusWrap>

    <Taskbar>
      <TaskButton $start>
        <Icon name="flag" />
        开始
      </TaskButton>
      <Grip />
      {tasks.map(([icon, text, on], i) => (
        <TaskButton key={i} $on={on}>
          <Icon name={icon} />
          {text}
        </TaskButton>
      ))}
      <Quick>
        <Grip $space={2} />
        <Icon name="ie" />
        <Icon name="sync" />
        <Icon name="note" />
        <Icon name="clock" />
      </Quick>
      <Tray>
        <Icon name="note2" />
        <Icon name="cross" />
        <Lang>CH</Lang>
        <Icon name="arrow" />
        <Icon name="sred" />
        <Icon name="clock2" />
        <time>15:55</time>
      </Tray>
    </Taskbar>

    <EngineeringWindow />

    <ImeBar>
      <Icon name="sogou" />
      <span>中</span>
      <Icon name="moon" />
      <Icon name="dot" />
      <Icon name="keys" />
      <Icon name="person" />
      <Icon name="wrench" />
    </ImeBar>
  </Screen>
);

export default App;
